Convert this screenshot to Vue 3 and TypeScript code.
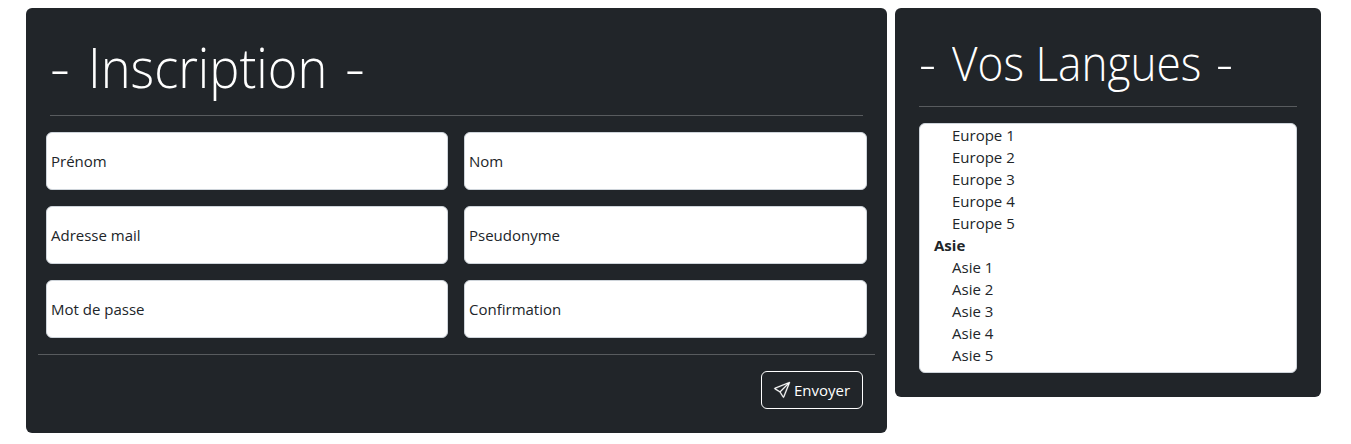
<script setup lang="ts">
const fields: string[] = ['Prénom', 'Nom', 'Adresse mail', 'Pseudonyme', 'Mot de passe', 'Confirmation']
const numbers: number[] = [1, 2, 3, 4, 5]
</script>

<template>
  <main class="page">
    <section class="card signup">
      <h1 class="heading">
        <span class="dash">-</span> <span class="word">Inscription</span> <span class="dash end">-</span>
      </h1>
      <hr class="rule" />
      <form class="grid" @submit.prevent>
        <label v-for="f in fields" :key="f" class="field"><span>{{ f }}</span></label>
      </form>
      <footer class="footer">
        <button class="send" type="button">
          <svg width="16" height="16" viewBox="0 0 16 16" fill="currentColor" stroke="currentColor" stroke-width="0.3">
            <path d="M15.854.146a.5.5 0 0 1 .11.54l-5.819 14.547a.75.75 0 0 1-1.329.124l-3.178-4.995L.643 7.184a.75.75 0 0 1 .124-1.33L15.314.037a.5.5 0 0 1 .54.11ZM6.636 10.07l2.761 4.338L14.13 2.576zm6.787-8.201L1.591 6.602l4.339 2.76z" />
          </svg>
          <span>Envoyer</span>
        </button>
      </footer>
    </section>
    <section class="card languages">
      <h2 class="heading small">
        <span class="dash">-</span> <span class="word">Vos Langues</span> <span class="dash end">-</span>
      </h2>
      <hr class="rule" />
      <div class="list">
        <div v-for="n in numbers" :key="'e' + n" class="option">Europe {{ n }}</div>
        <div class="group">Asie</div>
        <div v-for="n in numbers" :key="'a' + n" class="option">Asie {{ n }}</div>
      </div>
    </section>
  </main>
</template>

<style>
body { background: #fff; }
</style>

<style scoped>
* { box-sizing: border-box; }
.page {
  display: flex;
  align-items: flex-start;
  gap: 8px;
  padding: 8px 30px 0 26px;
  height: 444px;
  overflow: hidden;
  font-family: "Segoe UI", "Open Sans", "Noto Sans", sans-serif;
  font-size: 15px;
  color: #212529;
}
.card { background: #212529; border-radius: 6px; }
.signup { width: 861px; height: 425px; }
.languages { width: 426px; height: 389px; padding: 0 24px; }
.heading {
  margin: 0 24px;
  height: 107px;
  padding-top: 20px;
  font-size: 56px;
  line-height: 76px;
  font-weight: 300;
  color: #fff;
  white-space: nowrap;
}
.heading span { display: inline-block; transform-origin: 0 50%; }
.dash { transform: scaleX(1.1); }
.word { margin-left: 5px; transform: scaleX(0.903); }
.end { margin-left: -22px; }
.small { margin: 0; height: 98px; padding-top: 23px; font-size: 48px; line-height: 64px; }
.small .word { transform: scaleX(0.92); }
.small .end { margin-left: -19px; }
.rule { height: 1px; margin: 0 24px; border: 0; background: #585b5e; }
.languages .rule { margin: 0; }
.grid {
  display: grid;
  grid-template-columns: 402px 403px;
  gap: 16px;
  margin: 16px 20px;
}
.field {
  display: flex;
  align-items: center;
  height: 58px;
  padding: 0 4px;
  background: #fff;
  border: 1px solid #ced4da;
  border-radius: 6px;
}
.footer {
  display: flex;
  justify-content: flex-end;
  margin: 0 12px;
  padding: 16px 12px 0;
  border-top: 1px solid #585b5e;
}
.send {
  display: flex;
  align-items: center;
  justify-content: center;
  gap: 4px;
  width: 102px;
  height: 38px;
  padding: 0;
  font: inherit;
  color: #fff;
  background: transparent;
  border: 1px solid #fff;
  border-radius: 6px;
}
.send svg { overflow: visible; }
.list {
  height: 250px;
  margin-top: 16px;
  padding: 0 14px;
  overflow: hidden;
  background: #fff;
  border: 1px solid #ced4da;
  border-radius: 6px;
  line-height: 22px;
}
.option { padding-left: 18px; }
.group { font-weight: 700; }
</style>
